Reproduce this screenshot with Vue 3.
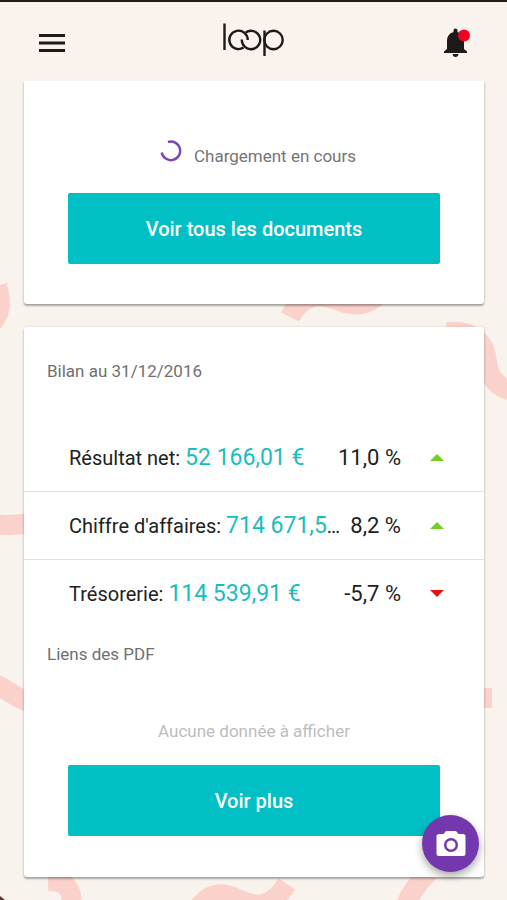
<script setup>
import { ref } from 'vue';

const loading = ref(true);

//Lignes du bilan
const rows = ref([
    { label: 'Résultat net:', value: '52 166,01 €', percent: '11,0 %', up: true },
    { label: "Chiffre d'affaires:", value: '714 671,50 €', percent: '8,2 %', up: true },
    { label: 'Trésorerie:', value: '114 539,91 €', percent: '-5,7 %', up: false }
]);
</script>

<template>
    <div class="page">
        <svg class="pattern" viewBox="0 0 507 900" preserveAspectRatio="xMidYMin slice" aria-hidden="true">
            <g fill="none" stroke="#fad2cb" stroke-width="20">
                <path d="M-3 286 Q5 312 -10 325" />
                <path d="M290 317 C304 290 325 296 337 300 C356 308 367 306 384 291" />
                <path d="M447 332 C474 330 485 342 487 362 C489 378 498 388 512 391" />
                <path d="M-5 524 Q14 527 34 522" />
                <path d="M-8 683 C5 686 13 698 34 704" />
                <path d="M470 698 H492" />
                <path d="M48 881 Q75 880 71 908" />
                <path d="M198 908 C212 889 226 893 240 900 C260 909 273 905 287 884" />
                <path d="M405 910 Q407 894 429 872" />
            </g>
            <path d="M0 896 L5 900 H0 Z" fill="#5a3735" />
        </svg>

        <header class="topbar">
            <button class="icon-btn" type="button" aria-label="Menu">
                <svg width="26" height="18" viewBox="0 0 26 18">
                    <path d="M0 1.5H26M0 9H26M0 16.5H26" stroke="#1d1a19" stroke-width="2.8" />
                </svg>
            </button>
            <svg class="logo" width="62" height="34" viewBox="0 0 62 34" role="img" aria-label="loop">
                <g fill="none" stroke="#1d1a19" stroke-width="2.4">
                    <path d="M2.500 0.500V27" />
                    <path d="M21.500 24.600A9.200 9.200 0 1 1 25.700 17" />
                    <path d="M23.500 9.600A9.200 9.200 0 1 1 19.800 16.500" />
                    <path d="M42.500 7.500V33" />
                    <circle cx="51.500" cy="17" r="9.200" />
                </g>
            </svg>
            <button class="icon-btn" type="button" aria-label="Notifications">
                <svg width="28" height="30" viewBox="0 0 28 30">
                    <path d="M9.500 4V2.500Q9.500 0.500 11.500 0.500T13.500 2.500V4Q20 6 20 13V21L23 23.500V25H0V23.500L3 21V13Q3 6 9.500 4Z" fill="#1d1a19" />
                    <path d="M8.500 26H14.500Q14 29 11.500 29T8.500 26Z" fill="#1d1a19" />
                    <circle cx="20" cy="7.500" r="6" fill="#f2001d" />
                </svg>
            </button>
        </header>

        <main>
            <section class="card documents">
                <p v-if="loading" class="loading" role="status">
                    <svg width="22" height="22" viewBox="0 0 22 22" aria-hidden="true">
                        <path d="M8 2A9.300 9.300 0 1 1 1.700 12.500" fill="none" stroke="#7a43b6" stroke-width="2.4" />
                    </svg>
                    <span>Chargement en cours</span>
                </p>
                <button class="main-btn" type="button">Voir tous les documents</button>
            </section>

            <section class="card balance">
                <h2>Bilan au 31/12/2016</h2>
                <ul>
                    <li v-for="row in rows" :key="row.label">
                        <span class="figure">{{ row.label }} <span class="value">{{ row.value }}</span></span>
                        <span class="percent">{{ row.percent }}</span>
                        <span class="arrow" :class="row.up ? 'up' : 'down'"></span>
                    </li>
                </ul>
                <h2>Liens des PDF</h2>
                <p class="empty">Aucune donnée à afficher</p>
                <button class="main-btn" type="button">Voir plus</button>
            </section>
        </main>

        <button class="camera" type="button" aria-label="Prendre une photo">
            <svg width="30" height="28" viewBox="0 0 30 28">
                <path d="M10 1H20L22.500 4H27Q29.500 4 29.500 6.500V23.500Q29.500 26 27 26H3Q0.500 26 0.500 23.500V6.500Q0.500 4 3 4H7.500Z" fill="#fff" />
                <circle cx="15" cy="15" r="5.800" fill="none" stroke="#7338ae" stroke-width="2.500" />
            </svg>
        </button>
    </div>
</template>

<style>
body {
    margin: 0;
    background: #f8f3ec;
}
</style>

<style scoped>
.page {
    position: relative;
    min-height: 100vh;
    box-sizing: border-box;
    overflow: hidden;
    border-top: 2px solid #241c1b;
    font-family: Roboto, sans-serif;
    color: #212121;
}

/* motif de fond */
.pattern {
    position: absolute;
    top: -2px;
    left: 0;
    width: 100%;
}

.topbar {
    position: relative;
    z-index: 1;
    display: flex;
    align-items: center;
    justify-content: space-between;
    height: 79px;
    padding: 2px 31px 0 35px;
    box-sizing: border-box;
    background: #faf2ed;
}

.icon-btn {
    display: flex;
    padding: 4px;
    border: 0;
    background: none;
    cursor: pointer;
}

.logo {
    margin: 0 4px 6px 0;
}

main {
    position: relative;
    display: flex;
    flex-direction: column;
    gap: 23px;
    padding: 0 23px 23px 24px;
}

.card {
    display: flex;
    flex-direction: column;
    background: #fff;
    border-radius: 3px;
    box-shadow: 0 2px 2px rgba(0, 0, 0, 0.3), 0 0 3px rgba(0, 0, 0, 0.12);
}

.documents {
    padding: 59px 44px 40px;
    border-radius: 0 0 3px 3px;
}

.loading {
    display: flex;
    justify-content: center;
    gap: 12px;
    margin: 0 0 23px;
    padding-left: 8px;
    font-size: 17px;
    line-height: 28px;
    color: #757575;
}

.loading span {
    padding-top: 2px;
}

.main-btn {
    height: 71px;
    border: 0;
    border-radius: 2px;
    background: #00bfc5;
    color: #fff;
    font-family: inherit;
    font-size: 20px;
    font-weight: 500;
    cursor: pointer;
}

.balance {
    padding: 32px 0 41px;
}

h2 {
    margin: 0 23px;
    font-size: 17px;
    font-weight: 400;
    line-height: 24px;
    color: #707070;
}

ul {
    margin: 41px 0 15px;
    padding: 0;
    list-style: none;
}

li {
    display: flex;
    align-items: center;
    height: 67px;
    padding: 0 40px 0 45px;
}

li + li {
    border-top: 1px solid #e0e0e0;
}

.figure {
    flex: 1;
    min-width: 0;
    overflow: hidden;
    text-overflow: ellipsis;
    white-space: nowrap;
    font-size: 20px;
    line-height: 32px;
}

.value {
    font-size: 23px;
    color: #1bbcc0;
}

.percent {
    margin-left: 4px;
    white-space: nowrap;
    font-size: 22px;
}

.arrow {
    margin-left: 29px;
    border: 7px solid transparent;
    border-top-width: 0;
    border-bottom-width: 0;
}

.up {
    border-bottom: 7px solid #72cf21;
}

.down {
    border-top: 7px solid #e5120f;
}

.empty {
    margin: 53px 44px 22px;
    text-align: center;
    font-size: 17px;
    line-height: 24px;
    color: #bdbdbd;
}

.main-btn:hover {
    background: #00adb3;
}

.balance .main-btn {
    margin: 0 44px;
}

.camera {
    position: fixed;
    right: 28px;
    bottom: 28px;
    display: flex;
    align-items: center;
    justify-content: center;
    width: 57px;
    height: 57px;
    padding: 0;
    border: 0;
    border-radius: 50%;
    background: #7338ae;
    box-shadow: 0 4px 8px rgba(0, 0, 0, 0.35);
    cursor: pointer;
}
</style>
